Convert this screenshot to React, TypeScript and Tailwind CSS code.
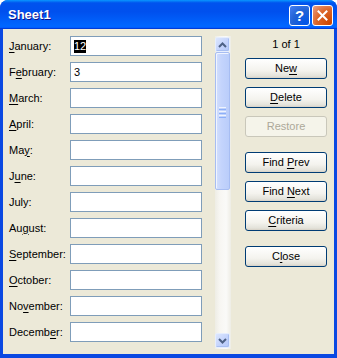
import React from "react";

const months: [string, number, string][] = [
  ["January:", 0, ""],
  ["February:", 1, "3"],
  ["March:", 0, ""],
  ["April:", 0, ""],
  ["May:", 2, ""],
  ["June:", 1, ""],
  ["July:", -1, ""],
  ["August:", 2, ""],
  ["September:", 0, ""],
  ["October:", 0, ""],
  ["November:", 2, ""],
  ["December:", 6, ""],
];

function Acc({ text, idx }: { text: string; idx: number }) {
  if (idx < 0) return <span className="whitespace-pre">{text}</span>;
  return (
    <span className="whitespace-pre">
      {text.slice(0, idx)}
      <span className="underline underline-offset-[2px]">{text[idx]}</span>
      {text.slice(idx + 1)}
    </span>
  );
}

function XpButton({
  text,
  idx,
  disabled,
  className,
}: {
  text: string;
  idx: number;
  disabled?: boolean;
  className?: string;
}) {
  return (
    <div
      className={
        "flex h-[21px] w-[82px] items-center justify-center rounded-[3px] border " +
        (disabled
          ? "border-[#C9C7BA] bg-[#F5F4EA] text-[#ACA899] "
          : "border-[#003C74] bg-[linear-gradient(180deg,#FFFFFF_0%,#F4F3EE_60%,#E3E2DA_90%,#D6D0C5_100%)] text-black ") +
        (className ?? "")
      }
    >
      {disabled ? <span>{text}</span> : <Acc text={text} idx={idx} />}
    </div>
  );
}

export default function App() {
  return (
    <div
      className="flex h-[358px] w-[337px] flex-col overflow-hidden rounded-t-[8px] bg-[#0A48E2] text-[11px] leading-[13px] text-black"
      style={{ fontFamily: '"Liberation Sans", Arial, sans-serif' }}
    >
      {/* title bar */}
      <div className="flex h-[29px] items-center justify-between bg-[linear-gradient(180deg,#0997FF_0%,#0053EE_10%,#0050EE_40%,#0066FF_88%,#0066FF_93%,#005BFF_95%,#003DD7_96%,#003DD7_100%)] pl-[8px] pr-[4px]">
        <span className="text-[13px] font-bold text-white [text-shadow:1px_1px_#0F1089]">
          Sheet1
        </span>
        <div className="flex gap-[2px] pt-[1px]">
          <div className="flex h-[21px] w-[21px] items-center justify-center rounded-[3px] border border-white bg-[radial-gradient(circle_at_80%_90%,#0054E9_0%,#2263D5_55%,#4480F5_100%)]">
            <span className="text-[15px] font-bold leading-none text-white">?</span>
          </div>
          <div className="flex h-[21px] w-[21px] items-center justify-center rounded-[3px] border border-white bg-[radial-gradient(circle_at_90%_90%,#CC4600_0%,#DC6527_55%,#E9A08A_100%)]">
            <svg width="11" height="11" viewBox="0 0 11 11">
              <path d="M1.5 1.5 L9.5 9.5 M9.5 1.5 L1.5 9.5" stroke="white" strokeWidth="2" strokeLinecap="square" />
            </svg>
          </div>
        </div>
      </div>

      {/* body */}
      <div className="mx-[3px] mb-[4px] flex flex-1 bg-[#ECE9D8] pl-[6px] pt-[7px]">
        {/* fields */}
        <div className="flex flex-col gap-[6px]">
          {months.map(([m, i, v], k) => (
            <div key={k} className="flex h-[20px] items-center">
              <div className="w-[61px]">
                <Acc text={m} idx={i} />
              </div>
              <div className="flex h-[20px] w-[132px] items-center border border-[#7F9DB9] bg-white pl-[3px]">
                {k === 0 ? (
                  <span className="bg-black px-[0px] text-white">12</span>
                ) : (
                  v
                )}
              </div>
            </div>
          ))}
        </div>

        {/* scrollbar */}
        <div className="ml-[13px] flex h-[313px] w-[16px] flex-col bg-[linear-gradient(90deg,#EEEDE5_0%,#F7F6F2_30%,#FAFAF8_70%,#EEEDE5_100%)] py-[1px]">
          <div className="flex h-[15px] w-[15px] items-center justify-center rounded-[2px] border border-[#E6EEFE] bg-[linear-gradient(135deg,#DCE6FE_0%,#C2D2FC_60%,#B4C8F8_100%)] shadow-[inset_-1px_-1px_#A9BFF2]">
            <svg width="9" height="6" viewBox="0 0 9 6">
              <path d="M1 5 L4.5 1.5 L8 5" stroke="#4D6185" strokeWidth="2" fill="none" />
            </svg>
          </div>
          <div className="flex h-[138px] w-[15px] items-center justify-center rounded-[2px] border border-[#A7BDF2] bg-[linear-gradient(90deg,#D4E0FE_0%,#C4D4FC_40%,#BACDFA_100%)] shadow-[inset_1px_1px_#F0F4FF]">
            <div className="-mt-[18px] flex flex-col gap-[1px]">
              <div className="h-[1px] w-[7px] bg-[#EEF4FE]" />
              <div className="h-[1px] w-[7px] bg-[#8CB0F8]" />
              <div className="h-[1px] w-[7px] bg-[#EEF4FE]" />
              <div className="h-[1px] w-[7px] bg-[#8CB0F8]" />
              <div className="h-[1px] w-[7px] bg-[#EEF4FE]" />
              <div className="h-[1px] w-[7px] bg-[#8CB0F8]" />
            </div>
          </div>
          <div className="flex-1" />
          <div className="flex h-[15px] w-[15px] items-center justify-center rounded-[2px] border border-[#E6EEFE] bg-[linear-gradient(135deg,#DCE6FE_0%,#C2D2FC_60%,#B4C8F8_100%)] shadow-[inset_-1px_-1px_#A9BFF2]">
            <svg width="9" height="6" viewBox="0 0 9 6">
              <path d="M1 1 L4.5 4.5 L8 1" stroke="#4D6185" strokeWidth="2" fill="none" />
            </svg>
          </div>
        </div>

        {/* buttons */}
        <div className="ml-[14px] flex w-[82px] flex-col">
          <div className="flex h-[16px] items-center justify-center pt-[1px]">1 of 1</div>
          <XpButton text="New" idx={2} className="mt-[6px]" />
          <XpButton text="Delete" idx={0} className="mt-[8px]" />
          <XpButton text="Restore" idx={0} disabled className="mt-[8px]" />
          <XpButton text="Find Prev" idx={5} className="mt-[15px]" />
          <XpButton text="Find Next" idx={5} className="mt-[8px]" />
          <XpButton text="Criteria" idx={0} className="mt-[8px]" />
          <XpButton text="Close" idx={1} className="mt-[15px]" />
        </div>
      </div>
    </div>
  );
}
